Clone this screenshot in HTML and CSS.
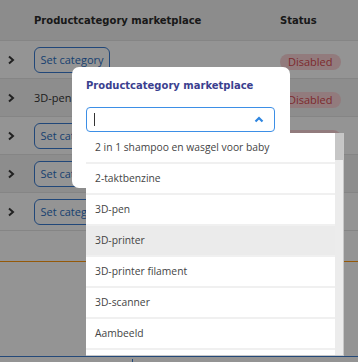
FILE: index.html
```html
<!DOCTYPE html>
<html lang="nl">
<head>
    <meta charset="UTF-8">
    <meta name="viewport" content="width=device-width, initial-scale=1.0">
    <title>Productcategorie</title>
    <link rel="stylesheet" href="styles.css">
</head>
<body>
    <div class="page">
        <div class="table">
            <div class="row head">
                <div></div>
                <div class="th">Productcategory marketplace</div>
                <div class="th">Status</div>
            </div>
            <div class="row">
                <div class="expand"><svg width="8" height="10" viewBox="0 0 8 10"><polyline points="2,1.5 6,5 2,8.5" fill="none" stroke="#3a3a3a" stroke-width="2"/></svg></div>
                <div><button class="set">Set category</button></div>
                <div><span class="badge">Disabled</span></div>
            </div>
            <div class="row alt">
                <div class="expand"><svg width="8" height="10" viewBox="0 0 8 10"><polyline points="2,1.5 6,5 2,8.5" fill="none" stroke="#3a3a3a" stroke-width="2"/></svg></div>
                <div class="cell-text">3D-pen</div>
                <div><span class="badge">Disabled</span></div>
            </div>
            <div class="row">
                <div class="expand"><svg width="8" height="10" viewBox="0 0 8 10"><polyline points="2,1.5 6,5 2,8.5" fill="none" stroke="#3a3a3a" stroke-width="2"/></svg></div>
                <div><button class="set">Set category</button></div>
                <div><span class="badge">Disabled</span></div>
            </div>
            <div class="row alt">
                <div class="expand"><svg width="8" height="10" viewBox="0 0 8 10"><polyline points="2,1.5 6,5 2,8.5" fill="none" stroke="#3a3a3a" stroke-width="2"/></svg></div>
                <div><button class="set">Set category</button></div>
                <div><span class="badge">Disabled</span></div>
            </div>
            <div class="row">
                <div class="expand"><svg width="8" height="10" viewBox="0 0 8 10"><polyline points="2,1.5 6,5 2,8.5" fill="none" stroke="#3a3a3a" stroke-width="2"/></svg></div>
                <div><button class="set">Set category</button></div>
                <div><span class="badge">Disabled</span></div>
            </div>
        </div>
        <div class="table-foot"></div>
        <div class="spacer"></div>
        <div class="tabs">
            <span class="tab">Voorraad en prijs</span>
            <span class="tab active">Kenmerken</span>
        </div>
    </div>

    <div class="overlay"></div>

    <div class="modal">
        <div class="modal-title">Productcategory marketplace</div>
        <div class="select">
            <span class="caret"></span>
            <svg class="chev" width="10" height="7" viewBox="0 0 10 7"><polyline points="1.5,5.5 5,2 8.5,5.5" fill="none" stroke="#2f86e0" stroke-width="2.2"/></svg>
        </div>
    </div>

    <div class="dropdown">
        <ul class="options">
            <li>2 in 1 shampoo en wasgel voor baby</li>
            <li>2-taktbenzine</li>
            <li>3D-pen</li>
            <li class="hover">3D-printer</li>
            <li>3D-printer filament</li>
            <li>3D-scanner</li>
            <li>Aambeeld</li>
            <li>Aanhanger</li>
        </ul>
        <div class="scrollbar"><div class="thumb"></div></div>
    </div>
</body>
</html>
```

FILE: styles.css
```css
body {
    margin: 0;
    width: 358px;
    height: 362px;
    overflow: hidden;
    font-family: "Open Sans", Arial, sans-serif;
    background-color: #ffffff;
    color: #333;
}
.page {
    width: 358px;
}
.table {
    display: flex;
    flex-direction: column;
}
.row {
    display: grid;
    grid-template-columns: 34px 246px 1fr;
    align-items: center;
    height: 37px;
    border-bottom: 1px solid #e6e6e6;
}
.row.head {
    height: 39px;
    padding-top: 1px;
    background-color: #f2f2f2;
}
.row.alt {
    background-color: #f3f3f3;
}
.th {
    font-family: "DejaVu Sans", Arial, sans-serif;
    font-weight: 700;
    font-size: 10px;
    color: #2b2b2b;
}
.expand {
    display: flex;
    padding-left: 7px;
}
.expand svg {
    display: block;
}
.set {
    font-family: "Open Sans", Arial, sans-serif;
    font-size: 11px;
    color: #2c6fc2;
    background: #ffffff;
    border: 1px solid #3a7bd0;
    border-radius: 6px;
    height: 26px;
    width: 76px;
    padding: 0;
    cursor: pointer;
}
.cell-text {
    font-size: 11px;
    color: #333;
}
.badge {
    display: inline-block;
    background-color: #fbd5d8;
    color: #d9484f;
    font-size: 11px;
    line-height: 16px;
    padding: 0 8px;
    border-radius: 8px;
}
.table-foot {
    height: 30px;
    border-bottom: 1px solid #ff9a10;
}
.spacer {
    height: 94px;
    border-bottom: 1px solid #3f7fd0;
}
.tabs {
    display: flex;
    gap: 20px;
    padding-left: 24px;
    font-size: 11px;
    line-height: 14px;
    padding-top: 2px;
    color: #2c6fc2;
}
.tab.active {
    border-left: 1px solid #3f7fd0;
    padding-left: 8px;
}
.overlay {
    position: fixed;
    inset: 0;
    background-color: rgba(0, 0, 0, 0.42);
}
.modal {
    position: absolute;
    left: 72px;
    top: 67px;
    width: 218px;
    height: 121px;
    box-sizing: border-box;
    padding: 12px 14px;
    background: #ffffff;
    border-radius: 7px;
}
.modal-title {
    font-family: "DejaVu Sans", Arial, sans-serif;
    font-weight: 700;
    font-size: 10px;
    color: #3b3f8f;
    line-height: 14px;
}
.select {
    margin-top: 14px;
    height: 25px;
    width: 189px;
    box-sizing: border-box;
    border: 1px solid #3d8fe6;
    border-radius: 4px;
    display: flex;
    align-items: center;
    justify-content: space-between;
    padding: 0 10px 0 7px;
}
.caret {
    width: 1px;
    height: 13px;
    background: #333;
}
.chev {
    display: block;
}
.dropdown {
    position: absolute;
    left: 86px;
    top: 133px;
    width: 257px;
    height: 222px;
    background: #ececec;
    border-right: 1px solid #c8c8c8;
    border-bottom: 1px solid #c8c8c8;
    display: flex;
    overflow: hidden;
}
.options {
    list-style: none;
    margin: 0;
    padding: 0;
    width: 249px;
}
.options li {
    height: 29px;
    line-height: 29px;
    padding-left: 9px;
    font-size: 10.3px;
    color: #444;
    background: #ffffff;
    border-bottom: 2px solid #f0f0f0;
}
.options li.hover {
    background: #ebebeb;
}
.scrollbar {
    width: 8px;
    background: #ececec;
}
.thumb {
    height: 27px;
    background: #c6c6c6;
}
```
